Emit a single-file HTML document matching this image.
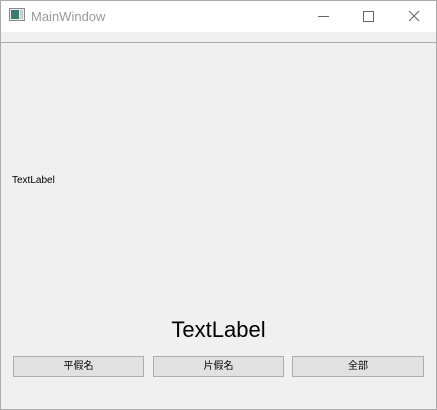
<!DOCTYPE html><html><head><meta charset="utf-8"><style>
body{margin:0;width:437px;height:410px;overflow:hidden;background:#f0f0f0;font-family:"Liberation Sans","Noto Sans CJK JP",sans-serif;position:relative}
.win{position:absolute;left:0;top:0;width:435px;height:408px;border:1px solid #aaa;background:#f0f0f0}
.title{position:absolute;left:0;top:0;width:435px;height:31px;background:#fff}
.t{position:absolute;left:30px;top:8px;font-size:13px;color:#999}
.menu{position:absolute;left:0;top:31px;width:435px;height:10px;border-bottom:1px solid #aaa;background:#f0f0f0}
.btn{position:absolute;top:355px;height:19px;border:1px solid #adadad;background:#e1e1e1;font-size:10px;text-align:center;line-height:19px;color:#000}
</style></head><body><div class="win">
<div class="title">
<svg style="position:absolute;left:8px;top:7px" width="17" height="14"><rect x="0.5" y="0.5" width="15" height="12" fill="#eee" stroke="#888"/><rect x="2" y="2" width="8" height="9" fill="#3a7a70"/><rect x="11" y="2" width="3" height="9" fill="#ccc"/></svg>
<div class="t">MainWindow</div>
<div style="position:absolute;left:317px;top:15px;width:11px;height:1px;background:#666"></div>
<div style="position:absolute;left:362px;top:10px;width:9px;height:9px;border:1px solid #666"></div>
<svg style="position:absolute;left:407px;top:9px" width="12" height="12"><path d="M1 1L11 11M11 1L1 11" stroke="#666" stroke-width="1"/></svg>
</div>
<div class="menu"></div>
<div style="position:absolute;left:11px;top:174px;font-size:10px">TextLabel</div>
<div style="position:absolute;left:0;width:435px;top:316px;text-align:center;font-size:22px">TextLabel</div>
<div class="btn" style="left:12px;width:129px">平假名</div>
<div class="btn" style="left:152px;width:129px">片假名</div>
<div class="btn" style="left:291px;width:130px">全部</div>
</div></body></html>
